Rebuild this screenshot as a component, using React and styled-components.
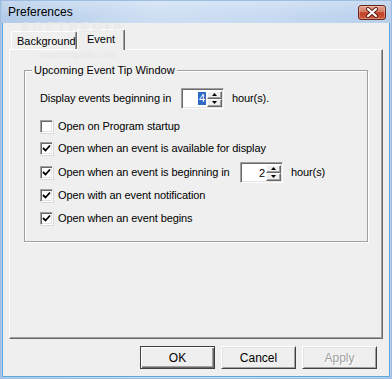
import React from 'react';
import styled, { createGlobalStyle } from 'styled-components';

const Global = createGlobalStyle`
  html, body { margin: 0; padding: 0; background: #fff; }
  body { font-family: "Liberation Sans", Arial, sans-serif; font-size: 11px; color: #000; }
  #root { width: 392px; height: 379px; }
  * { box-sizing: border-box; }
`;

const Window = styled.div`
  position: relative;
  width: 392px;
  height: 379px;
  display: flex;
  flex-direction: column;
  border: 1px solid #9fbde0;
  padding: 0 1px 1px 1px;
  background: linear-gradient(to right, #b3cbe8 0%, #cddff3 40%, #c6daf1 70%, #b8cfec 100%);
  overflow: hidden;
`;

const TitleBar = styled.div`
  height: 22px;
  flex: none;
  display: flex;
  align-items: center;
  justify-content: space-between;
  padding: 0 4px 0 6px;
  background: linear-gradient(to bottom, rgba(255,255,255,0.25), rgba(255,255,255,0) 70%);
`;

const Title = styled.span`
  font-size: 12px;
  color: #000;
`;

const CloseButton = styled.div`
  width: 28px;
  height: 15px;
  border: 1px solid #6a2419;
  border-radius: 3px;
  background: linear-gradient(to bottom, #e2a08f 0%, #d37a63 45%, #bf4126 52%, #cc5a3e 100%);
  display: flex;
  align-items: center;
  justify-content: center;
  box-shadow: inset 0 0 0 1px rgba(255,255,255,0.3);
`;

const Client = styled.div`
  flex: 1;
  display: flex;
  flex-direction: column;
  background: #efefef;
  border: 1px solid #5aa6de;
  border-top: none;
  padding: 6px 6px 0 6px;
`;

const TabStrip = styled.div`
  height: 20px;
  display: flex;
  align-items: flex-end;
  padding-left: 2px;
  position: relative;
  z-index: 1;
`;

const Tab = styled.div`
  height: ${p => (p.$active ? '21px' : '18px')};
  margin-bottom: ${p => (p.$active ? '-1px' : '0')};
  width: ${p => p.$w}px;
  padding-left: ${p => p.$pl}px;
  display: flex;
  align-items: ${p => (p.$active ? 'flex-start' : 'center')};
  padding-top: ${p => (p.$active ? '3px' : '0')};
  background: #efefef;
  border-top: 1px solid #fff;
  border-left: 1px solid #fff;
  border-right: 1px solid #696969;
  border-radius: 2px 2px 0 0;
  box-shadow: inset -1px 0 0 #a0a0a0;
`;

const Panel = styled.div`
  width: 374px;
  height: 290px;
  border-top: 1px solid #fff;
  border-left: 1px solid #fff;
  border-right: 1px solid #696969;
  border-bottom: 1px solid #696969;
  box-shadow: inset -1px -1px 0 #a0a0a0;
  padding: 20px 0 0 14px;
`;

const Group = styled.div`
  position: relative;
  width: 344px;
  height: 172px;
  border: 1px solid #a0a0a0;
  box-shadow: 1px 1px 0 #fff, inset 1px 1px 0 #fff;
  padding: 16px 0 0 15px;
`;

const Legend = styled.span`
  position: absolute;
  left: 7px;
  top: -8px;
  padding: 0 2px;
  background: #efefef;
  line-height: 14px;
`;

const Row = styled.div`
  height: 22px;
  margin-top: ${p => p.$mt || 0}px;
  display: flex;
  align-items: center;
`;

const Label = styled.span`
  width: ${p => (p.$w ? `${p.$w}px` : 'auto')};
  flex: none;
  white-space: nowrap;
  letter-spacing: -0.1px;
`;

const Box = styled.span`
  width: 13px;
  height: 13px;
  flex: none;
  margin-right: 5px;
  background: #fff;
  border-top: 1px solid #a0a0a0;
  border-left: 1px solid #a0a0a0;
  border-right: 1px solid #fff;
  border-bottom: 1px solid #fff;
  box-shadow: inset 1px 1px 0 #696969, inset -1px -1px 0 #e3e3e3, 1px 1px 0 #d8d8d8;
  display: flex;
  align-items: center;
  justify-content: center;
`;

const Spin = styled.span`
  width: 43px;
  height: 21px;
  flex: none;
  display: flex;
  background: #fff;
  border-top: 1px solid #a0a0a0;
  border-left: 1px solid #a0a0a0;
  border-right: 1px solid #fff;
  border-bottom: 1px solid #fff;
  box-shadow: inset 1px 1px 0 #696969, inset -1px -1px 0 #e3e3e3;
  padding: 2px 1px 1px 2px;
  margin-right: ${p => p.$mr}px;
`;

const SpinValue = styled.span`
  flex: 1;
  display: flex;
  align-items: center;
  justify-content: flex-end;
  padding-right: 1px;
`;

const Selected = styled.span`
  background: #316ac5;
  color: #fff;
  padding: 0 1px;
  line-height: 13px;
`;

const SpinButtons = styled.span`
  width: 15px;
  display: flex;
  flex-direction: column;
`;

const SpinBtn = styled.span`
  flex: 1;
  display: flex;
  align-items: center;
  justify-content: center;
  background: #efefef;
  border-top: 1px solid #fff;
  border-left: 1px solid #fff;
  border-right: 1px solid #696969;
  border-bottom: 1px solid #696969;
  box-shadow: inset -1px -1px 0 #a0a0a0;
`;

const ButtonRow = styled.div`
  display: flex;
  justify-content: flex-end;
  gap: 6px;
  margin-top: 7px;
  padding-right: 6px;
`;

const Button = styled.div`
  width: 75px;
  height: 23px;
  display: flex;
  align-items: center;
  justify-content: center;
  background: #efefef;
  border: 1px solid #404040;
  border-top-color: ${p => (p.$default ? '#404040' : '#fff')};
  border-left-color: ${p => (p.$default ? '#404040' : '#fff')};
  box-shadow: ${p =>
    p.$default
      ? 'inset 1px 1px 0 #fff, inset -1px -1px 0 #696969, inset -2px -2px 0 #a0a0a0'
      : 'inset 1px 1px 0 #e3e3e3, inset -1px -1px 0 #a0a0a0'};
  color: ${p => (p.$disabled ? '#a0a0a0' : '#000')};
  text-shadow: ${p => (p.$disabled ? '1px 1px 0 #fff' : 'none')};
  font-size: 12px;
`;

const Watermark = styled.span`
  position: absolute;
  left: ${p => p.$x}px;
  top: ${p => p.$y}px;
  font-size: ${p => p.$size}px;
  line-height: ${p => p.$lh}px;
  font-weight: ${p => p.$weight};
  letter-spacing: ${p => p.$ls}px;
  color: rgba(255, 255, 255, 0.5);
  text-shadow: 0 0 1px rgba(160, 160, 160, 0.3);
  pointer-events: none;
  z-index: 3;
`;

const Check = () => (
  <svg width="9" height="9" viewBox="0 0 9 9">
    <polyline points="1,4 3.5,6.5 8,1.5" fill="none" stroke="#000" strokeWidth="1.8" />
  </svg>
);

const Arrow = ({ up }) => (
  <svg width="5" height="3" viewBox="0 0 5 3">
    <polygon points={up ? '2.5,0 5,3 0,3' : '0,0 5,0 2.5,3'} fill="#000" />
  </svg>
);

const SpinBox = ({ value, selected, mr }) => (
  <Spin $mr={mr}>
    <SpinValue>{selected ? <Selected>{value}</Selected> : value}</SpinValue>
    <SpinButtons>
      <SpinBtn><Arrow up /></SpinBtn>
      <SpinBtn><Arrow /></SpinBtn>
    </SpinButtons>
  </Spin>
);

const CheckRow = ({ checked, children, mt, w, extra }) => (
  <Row $mt={mt}>
    <Box>{checked && <Check />}</Box>
    <Label $w={w}>{children}</Label>
    {extra}
  </Row>
);

export default function App() {
  return (
    <>
      <Global />
      <Window>
        <TitleBar>
          <Title>Preferences</Title>
          <CloseButton>
            <svg width="14" height="11" viewBox="0 0 14 11">
              <path d="M3 2 L11 9 M11 2 L3 9" stroke="#5a1d14" strokeWidth="4" strokeLinecap="round" />
              <path d="M3 2 L11 9 M11 2 L3 9" stroke="#fff" strokeWidth="2.2" strokeLinecap="round" />
            </svg>
          </CloseButton>
        </TitleBar>
        <Client>
          <TabStrip>
            <Tab $w={66} $pl={5}>Background</Tab>
            <Tab $active $w={48} $pl={9}>Event</Tab>
          </TabStrip>
          <Panel>
            <Group>
              <Legend>Upcoming Event Tip Window</Legend>
              <Row>
                <Label $w={141}>Display events beginning in</Label>
                <SpinBox value="4" selected mr={8} />
                <Label>hour(s).</Label>
              </Row>
              <CheckRow mt={6}>Open on Program startup</CheckRow>
              <CheckRow checked>Open when an event is available for display</CheckRow>
              <CheckRow
                checked
                mt={2}
                w={182}
                extra={<><SpinBox value="2" mr={8} /><Label>hour(s)</Label></>}
              >
                Open when an event is beginning in
              </CheckRow>
              <CheckRow checked mt={1}>Open with an event notification</CheckRow>
              <CheckRow checked mt={1}>Open when an event begins</CheckRow>
            </Group>
          </Panel>
          <ButtonRow>
            <Button $default>OK</Button>
            <Button>Cancel</Button>
            <Button $disabled>Apply</Button>
          </ButtonRow>
        </Client>
        <Watermark $x={20} $y={19} $size={12} $lh={14} $weight={700} $ls={4}>SOFTPEDIA</Watermark>
        <Watermark $x={38} $y={50} $size={9} $lh={8} $weight={400} $ls={0}>www.softpedia.com</Watermark>
      </Window>
    </>
  );
}
